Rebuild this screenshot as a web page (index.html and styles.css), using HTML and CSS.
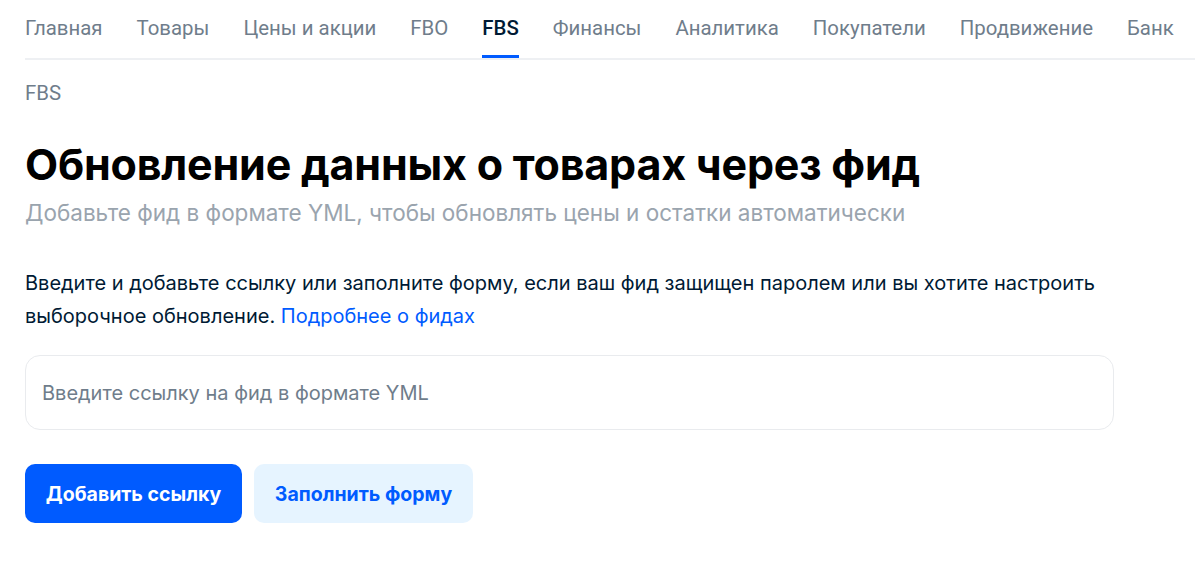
FILE: index.html
```html
<!DOCTYPE html>
<html lang="ru">
<head>
<meta charset="utf-8">
<title>FBS — обновление через фид</title>
<link rel="stylesheet" href="styles.css">
</head>
<body>
<div class="page">
  <nav class="tabs">
    <a class="tab">Главная</a>
    <a class="tab">Товары</a>
    <a class="tab">Цены и акции</a>
    <a class="tab">FBO</a>
    <a class="tab active">FBS</a>
    <a class="tab">Финансы</a>
    <a class="tab">Аналитика</a>
    <a class="tab">Покупатели</a>
    <a class="tab">Продвижение</a>
    <a class="tab">Банк</a>
  </nav>
  <div class="crumb">FBS</div>
  <h1 class="title">Обновление данных о товарах через фид</h1>
  <p class="subtitle">Добавьте фид в формате YML, чтобы обновлять цены и остатки автоматически</p>
  <p class="text">Введите и добавьте ссылку или заполните форму, если ваш фид защищен паролем или вы хотите настроить выборочное обновление. <a class="link">Подробнее о фидах</a></p>
  <div class="field"><span class="placeholder">Введите ссылку на фид в формате YML</span></div>
  <div class="actions">
    <button class="btn primary">Добавить ссылку</button>
    <button class="btn secondary">Заполнить форму</button>
  </div>
</div>
</body>
</html>
```
FILE: styles.css
```css
* { box-sizing: border-box; }
html, body { margin: 0; background: #fff; }
body { font-family: Inter, Roboto, "Liberation Sans", sans-serif; color: #001a34; }
.page { padding: 0 5px 0 25px; }
.tabs {
  display: flex;
  gap: 34px;
  border-bottom: 2px solid #eef0f3;
  height: 60px;
}
.tab {
  font-family: Roboto, "Liberation Sans", sans-serif;
  font-size: 20.4px;
  color: #6f7d8b;
  height: 58px;
  line-height: 56px;
  border-bottom: 3px solid transparent;
  margin-bottom: -2px;
  white-space: nowrap;
}
.tab.active { color: #001a34; font-weight: 500; border-bottom-color: #005bff; }
.crumb {
  font-family: Roboto, "Liberation Sans", sans-serif;
  font-size: 20.4px;
  color: #6f7d8b;
  margin-top: 21px;
  line-height: 24px;
}
.title {
  margin: 33px 0 0;
  font-size: 43px;
  line-height: 52px;
  font-weight: 700;
  color: #000;
  letter-spacing: -0.2px;
}
.subtitle {
  margin: 8px 0 0;
  font-size: 22.5px;
  line-height: 30px;
  color: #9aa4ae;
}
.text {
  margin: 39px 0 0;
  font-size: 20px;
  line-height: 33px;
  color: #001a34;
  max-width: 1100px;
}
.link { color: #005bff; }
.field {
  margin-top: 22px;
  width: 1089px;
  height: 75px;
  border: 1.5px solid #e9ebee;
  border-radius: 15px;
  display: flex;
  align-items: center;
  padding-left: 16px;
}
.placeholder { font-size: 20px; color: #6f7d8b; }
.actions { display: flex; gap: 12px; margin-top: 34px; }
.btn {
  font-family: Inter, Roboto, sans-serif;
  height: 59px;
  border: 0;
  border-radius: 10px;
  font-size: 19.5px;
  font-weight: 700;
  padding: 0;
}
.btn.primary { background: #005bff; color: #fff; width: 217px; }
.btn.secondary { background: #e6f4ff; color: #005bff; width: 219px; }
```
